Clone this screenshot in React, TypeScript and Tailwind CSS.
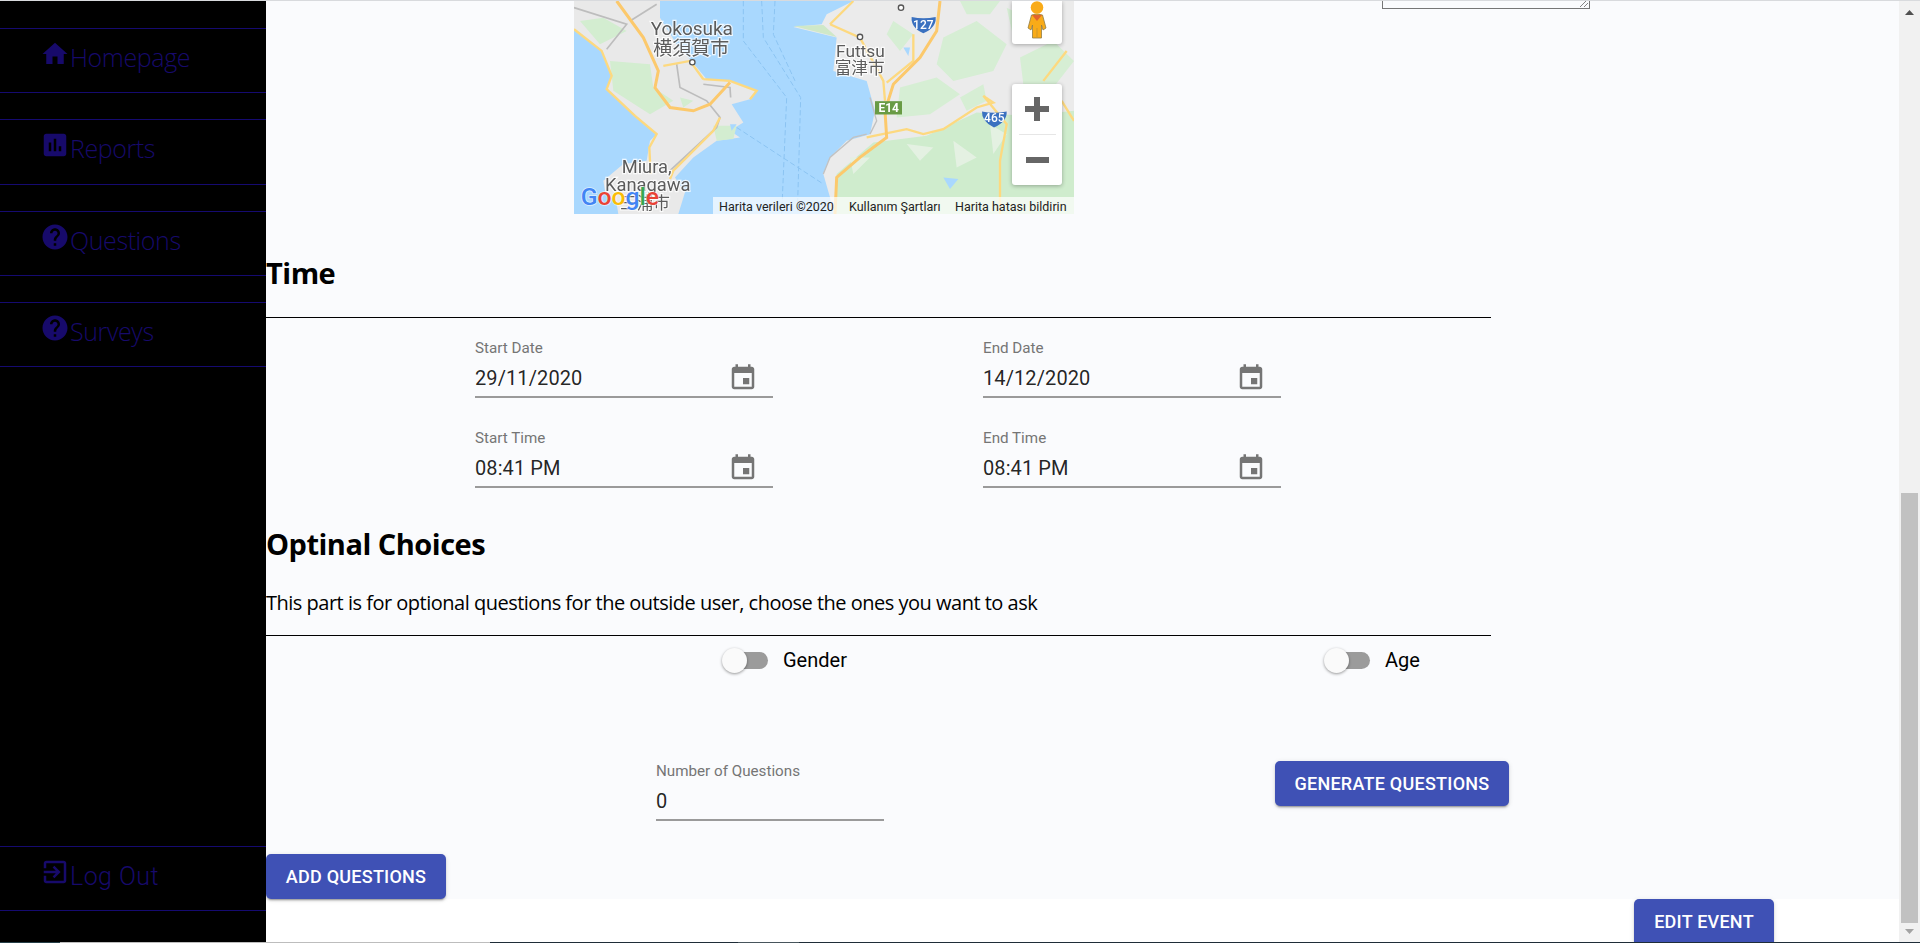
import React from "react";

const HOME = "M10 20v-6h4v6h5v-8h3L12 3 2 12h3v8z";
const REPORT = "M19 3H5c-1.1 0-2 .9-2 2v14c0 1.1.9 2 2 2h14c1.1 0 2-.9 2-2V5c0-1.1-.9-2-2-2zM9 17H7v-7h2v7zm4 0h-2V7h2v10zm4 0h-2v-4h2v4z";
const HELP = "M12 2C6.48 2 2 6.48 2 12s4.48 10 10 10 10-4.48 10-10S17.52 2 12 2zm1 17h-2v-2h2v2zm2.07-7.75l-.9.92C13.45 12.9 13 13.5 13 15h-2v-.5c0-1.1.45-2.1 1.17-2.83l1.24-1.26c.37-.36.59-.86.59-1.41 0-1.1-.9-2-2-2s-2 .9-2 2H8c0-2.21 1.79-4 4-4s4 1.79 4 4c0 .88-.36 1.68-.93 2.25z";
const LOGOUT = "M10.09 15.59L11.5 17l5-5-5-5-1.41 1.41L12.67 11H3v2h9.67l-2.58 2.59zM19 3H5c-1.11 0-2 .9-2 2v4h2V5h14v14H5v-4H3v4c0 1.1.89 2 2 2h14c1.1 0 2-.9 2-2V5c0-1.1-.9-2-2-2z";
const EVENT = "M17 12h-5v5h5v-5zM16 1v2H8V1H6v2H5c-1.11 0-1.99.9-1.99 2L3 19c0 1.1.89 2 2 2h14c1.1 0 2-.9 2-2V5c0-1.1-.9-2-2-2h-1V1h-2zm3 18H5V8h14v11z";

function Icon({ d, className }: { d: string; className?: string }) {
  return (
    <svg viewBox="0 0 24 24" className={className} fill="currentColor">
      <path d={d} />
    </svg>
  );
}

function NavItem({ icon, label, roboto, tall }: { icon: string; label: string; roboto?: boolean; tall?: boolean }) {
  return (
    <div className={(tall ? "h-[66px] " : "h-[65px] ") + "flex shrink-0 items-start border-y border-[#150a70] pl-[40px] text-[#170a6b]"}>
      <Icon d={icon} className="mt-[10px] h-[30px] w-[30px] shrink-0" />
      <span
        className={
          roboto
            ? "mt-[13px] font-['Roboto',sans-serif] text-[25px] leading-[34px] font-light tracking-[0.45px]"
            : "mt-[11px] font-['Open_Sans',sans-serif] text-[25px] leading-[34px] font-light tracking-[-0.4px]"
        }
      >
        {label}
      </span>
    </div>
  );
}

function Sidebar() {
  return (
    <aside className="flex h-[941px] w-[266px] shrink-0 flex-col bg-black pt-[27px]">
      <NavItem icon={HOME} label="Homepage" />
      <div className="h-[26px] shrink-0" />
      <NavItem icon={REPORT} label="Reports" tall />
      <div className="h-[26px] shrink-0" />
      <NavItem icon={HELP} label="Questions" />
      <div className="h-[26px] shrink-0" />
      <NavItem icon={HELP} label="Surveys" />
      <div className="flex-1" />
      <NavItem icon={LOGOUT} label="Log Out" roboto />
      <div className="h-[31px] shrink-0" />
    </aside>
  );
}

function MapDrawing() {
  const label = "fill-[#5b5b5b] stroke-white font-['Roboto','Noto_Sans_CJK_JP',sans-serif]";
  const halo = { paintOrder: "stroke" as const, strokeWidth: 7, strokeOpacity: 0.8 };
  return (
    <svg viewBox="42 0 1500 640" className="block h-[213px] w-[500px]" preserveAspectRatio="none">
      <defs>
        <filter id="soft">
          <feGaussianBlur stdDeviation="1.6" />
        </filter>
      </defs>
      <g filter="url(#soft)">
        <rect x="42" y="0" width="1500" height="640" fill="#a9d8fe" />
        <path d="M42 0 L300 0 L300 50 L350 130 L390 175 L440 235 L510 240 L590 270 L570 295 L515 310 L550 365 L510 390 L540 410 L470 420 L400 470 L345 530 L375 575 L355 640 L175 640 L170 610 L135 570 L130 540 L190 490 L260 480 L270 420 L290 400 L225 345 L140 265 L155 225 L125 150 L42 85 Z" fill="#e9e9e9" />
        <path d="M880 0 L800 40 L785 70 L700 78 L830 110 L820 210 L920 240 L945 330 L930 400 L860 420 L810 470 L790 520 L810 590 L820 640 L1542 640 L1542 0 Z" fill="#ebebeb" />
        <path d="M60 60 L130 50 L200 90 L120 130 Z M150 180 L270 190 L280 260 L340 300 L270 340 L160 270 Z M460 375 L530 375 L520 415 L470 420 Z M360 290 L400 300 L370 320 Z" fill="#d3edd0" />
        <path d="M820 640 L830 520 L940 425 L1100 405 L1250 335 L1400 345 L1542 330 L1542 640 Z" fill="#cfeccd" />
        <path d="M1150 110 L1250 60 L1340 130 L1300 210 L1180 240 L1130 190 Z M1000 60 L1060 100 L1020 150 L980 100 Z M1380 170 L1480 120 L1542 180 L1480 260 L1390 250 Z M1200 0 L1320 0 L1290 40 L1220 40 Z M1020 260 L1130 230 L1200 280 L1110 340 L1010 350 Z M1340 20 L1420 60 L1360 110 Z M1200 290 L1270 250 L1280 300 L1220 330 Z M1400 280 L1500 270 L1500 320 L1410 330 Z" fill="#d6eed4" />
        <path d="M1040 430 L1120 440 L1080 480 Z M1180 420 L1250 470 L1190 500 Z M1290 370 L1340 400 L1300 460 Z M870 470 L930 470 L880 520 Z" fill="#e4f1e2" />
        <path d="M700 75 L790 72 L830 108 Z" fill="#cfe8c8" />
        <path d="M1150 530 L1195 535 L1170 565 Z M1030 140 L1050 140 L1045 165 Z M510 370 L530 370 L515 390 Z" fill="#a9d8fe" />
        <path d="M550 0 L550 120 L680 290 L665 640 M605 0 L610 110 L722 290 L712 640 M645 0 L640 100 L705 240 M530 380 L790 550" fill="none" stroke="#8cc4f2" strokeWidth="3" strokeDasharray="16 8" />
        <path d="M42 20 L200 70 L140 145 M210 60 L290 10 M350 190 L360 260 L440 300 L480 350 L470 380 L330 510 M430 250 L510 260 L512 290" fill="none" stroke="#bdbdbd" strokeWidth="5" />
        <path d="M42 85 L125 150 L155 225 L140 265 L225 345 L290 400 L268 440 L272 520 M480 350 L460 390 L340 510 L330 535 M430 235 L510 240 L590 270 L570 295 M310 195 L390 180 L430 235" fill="none" stroke="#fdd97f" strokeWidth="7" />
        <path d="M170 0 L250 110 L295 210 L285 260 L330 320 L400 330 L450 310 L510 245" fill="none" stroke="#fcc96c" strokeWidth="9" />
        <path d="M810 70 L880 0 M810 70 L900 110 L970 240 L975 300 M1060 100 L1060 180 L980 245 M920 410 L1040 385 L1090 400 L1150 385 L1250 320 L1300 305 L1270 285 L1340 370 L1320 480 L1320 640 M1520 150 L1450 240 M1505 300 L1542 360" fill="none" stroke="#fdd97f" strokeWidth="7" />
        <path d="M1140 0 L1130 90 L1080 170 L1000 250 L975 330 L980 410 L900 470 L830 530 L825 640" fill="none" stroke="#fcc96c" strokeWidth="9" />
        <path d="M790 520 L810 470 L880 410 L920 400 M930 290 L950 360 L930 400" fill="none" stroke="#c2c2c2" strokeWidth="4" />
        <text x="272" y="102" fontSize="57" className={label} style={halo}>Yokosuka</text>
        <text x="280" y="162" fontSize="57" className={label} style={halo}>横須賀市</text>
        <text x="828" y="167" fontSize="52" className={label} style={halo}>Futtsu</text>
        <text x="824" y="219" fontSize="50" className={label} style={halo}>富津市</text>
        <text x="185" y="517" fontSize="55" className={label} style={halo}>Miura,</text>
        <text x="135" y="570" fontSize="55" className={label} style={halo}>Kanagawa</text>
        <text x="180" y="624" fontSize="50" className={label} style={halo}>三浦市</text>
        <circle cx="397" cy="184" r="8" fill="#fff" stroke="#555" strokeWidth="4" />
        <circle cx="900" cy="108" r="8" fill="#fff" stroke="#555" strokeWidth="4" />
        <circle cx="1023" cy="20" r="8" fill="#fff" stroke="#555" strokeWidth="4" />
        <path d="M1055 48 Q1090 56 1127 48 Q1130 80 1090 97 Q1052 80 1055 48 Z" fill="#3a71c0" />
        <text x="1090" y="84" fontSize="36" fontWeight="500" textAnchor="middle" fill="#fff" className="font-['Roboto',sans-serif]">127</text>
        <path d="M1266 332 Q1302 340 1340 332 Q1342 362 1302 380 Q1264 362 1266 332 Z" fill="#3a71c0" />
        <text x="1303" y="365" fontSize="36" fontWeight="500" textAnchor="middle" fill="#fff" className="font-['Roboto',sans-serif]">465</text>
        <rect x="945" y="301" width="81" height="40" fill="#699b45" />
        <text x="986" y="334" fontSize="36" fontWeight="700" textAnchor="middle" fill="#fff" className="font-['Roboto',sans-serif]">E14</text>
      </g>
      <text x="62" y="612" fontSize="74" fontWeight="500" className="font-['Roboto',sans-serif]" stroke="#fff" strokeWidth="5" strokeOpacity="0.6" style={{ paintOrder: "stroke" }}>
        <tspan fill="#4285f4">G</tspan>
        <tspan fill="#ea4335">o</tspan>
        <tspan fill="#fbbc05">o</tspan>
        <tspan fill="#4285f4">g</tspan>
        <tspan fill="#34a853">l</tspan>
        <tspan fill="#ea4335">e</tspan>
      </text>
    </svg>
  );
}

function MapBox() {
  return (
    <div className="relative h-[213px] w-[500px] shrink-0 overflow-hidden">
      <MapDrawing />
      <div className="absolute top-0 right-[12px] flex h-[43px] w-[50px] justify-center rounded-b-[3px] bg-white shadow-[0_1px_4px_rgba(0,0,0,0.3)]">
        <svg viewBox="0 0 50 43" className="h-[43px] w-[50px]">
          <path d="M19.5 14 Q25 12 30.5 14 L34 27 L31 29 L29.5 24 L29.5 37 L20.5 37 L20.5 24 L19 29 L16 27 Z" fill="#f9ab18" stroke="#8f7c46" strokeWidth="0.8" />
          <path d="M24.8 36 L25.2 36 L25.2 27 L24.8 27 Z" fill="#8f7c46" />
          <path d="M20 14 L30 14 L25 20 Z" fill="#e2642c" />
          <circle cx="25" cy="6.5" r="6.3" fill="#f9ab18" />
        </svg>
      </div>
      <div className="absolute top-[83px] right-[12px] flex h-[101px] w-[50px] flex-col items-center rounded-[3px] bg-white shadow-[0_1px_4px_rgba(0,0,0,0.3)]">
        <div className="flex h-[50px] w-full items-center justify-center">
          <svg viewBox="0 0 24 24" className="h-[24px] w-[24px]" fill="#666">
            <path d="M9 0h6v9h9v6h-9v9H9v-9H0V9h9z" />
          </svg>
        </div>
        <div className="h-px w-[37px] bg-[#e6e6e6]" />
        <div className="flex h-[50px] w-full items-center justify-center">
          <div className="h-[6px] w-[23px] bg-[#666]" />
        </div>
      </div>
      <div className="absolute right-0 bottom-0 flex h-[17px] w-[361px] items-center bg-white/70 pt-[3px] pl-[6px] font-['Roboto',sans-serif] text-[12.5px] leading-[14px] text-[#222]">
        <span className="w-[130px]">Harita verileri ©2020</span>
        <span className="w-[106px]">Kullanım Şartları</span>
        <span>Harita hatası bildirin</span>
      </div>
    </div>
  );
}

function Field({ label, value, width, icon }: { label: string; value: string; width: string; icon?: boolean }) {
  return (
    <div className={width}>
      <div className="h-[20px] font-['Roboto',sans-serif] text-[15.2px] leading-[20px] text-[#757575]">{label}</div>
      <div className="mt-[4px] flex h-[36px] items-start justify-between border-b-[2px] border-[#9a9a9a] font-['Roboto',sans-serif] text-[20px] leading-[32px] tracking-[0.1px] text-[rgba(0,0,0,0.87)]">
        <span>{value}</span>
        {icon && <Icon d={EVENT} className="mt-[1px] mr-[15px] h-[30px] w-[30px] shrink-0 text-[#757575]" />}
      </div>
    </div>
  );
}

function Toggle({ label }: { label: string }) {
  return (
    <div className="flex h-[25px] items-center">
      <div className="flex h-[25px] w-[46px] items-center">
        <div className="z-10 h-[25px] w-[25px] shrink-0 rounded-full bg-[#fafafa] shadow-[0_1px_3px_rgba(0,0,0,0.4)]" />
        <div className="-ml-[12px] h-[17px] w-[33px] shrink-0 rounded-r-full bg-[#9b9b9b]" />
      </div>
      <span className="ml-[15px] font-['Roboto',sans-serif] text-[20px] leading-[25px] text-black">{label}</span>
    </div>
  );
}

function Btn({ children, className }: { children: React.ReactNode; className: string }) {
  return (
    <div
      className={
        "flex h-[45px] shrink-0 items-center justify-center rounded-[5px] bg-[#3f51b5] font-['Roboto',sans-serif] text-[18px] font-medium tracking-[0.25px] text-white shadow-[0_3px_1px_-2px_rgba(0,0,0,0.2),0_2px_2px_0_rgba(0,0,0,0.14),0_1px_5px_0_rgba(0,0,0,0.12)] " +
        className
      }
    >
      {children}
    </div>
  );
}

function Main() {
  const heading = "font-['Open_Sans',sans-serif] text-[29px] leading-[40px] font-bold tracking-[-0.5px] text-black";
  return (
    <main className="flex h-[941px] w-[1633px] shrink-0 flex-col overflow-hidden bg-white">
      <div className="h-[898px] shrink-0 bg-[#fafbfd]">
        <div className="flex items-start pl-[308px]">
          <MapBox />
          <div className="relative ml-[308px] h-[8px] w-[208px] border-x border-b border-[#767676]">
            <svg viewBox="0 0 8 7" className="absolute right-[1px] bottom-[1px] h-[7px] w-[8px]" stroke="#666" strokeWidth="0.8">
              <path d="M0 7 L7 0 M4 7 L8 3" />
            </svg>
          </div>
        </div>
        <h2 className={heading + " mt-[39px]"}>Time</h2>
        <div className="mt-[24px] h-px w-[1225px] bg-black" />
        <div className="mt-[20px] ml-[209px] grid w-[806px] grid-cols-[298px_298px] gap-x-[210px] gap-y-[30px]">
          <Field label="Start Date" value="29/11/2020" width="w-[298px]" icon />
          <Field label="End Date" value="14/12/2020" width="w-[298px]" icon />
          <Field label="Start Time" value="08:41 PM" width="w-[298px]" icon />
          <Field label="End Time" value="08:41 PM" width="w-[298px]" icon />
        </div>
        <h2 className={heading + " mt-[36px]"}>Optinal Choices</h2>
        <p className="mt-[25px] font-['Open_Sans',sans-serif] text-[20px] leading-[28px] tracking-[-0.5px] text-black">
          This part is for optional questions for the outside user, choose the ones you want to ask
        </p>
        <div className="mt-[18px] h-px w-[1225px] bg-black" />
        <div className="mt-[12px] flex pl-[456px]">
          <div className="w-[602px]">
            <Toggle label="Gender" />
          </div>
          <Toggle label="Age" />
        </div>
        <div className="mt-[88px] flex items-start pl-[390px]">
          <Field label="Number of Questions" value="0" width="w-[228px]" />
          <Btn className="ml-[391px] w-[234px]">GENERATE QUESTIONS</Btn>
        </div>
        <Btn className="mt-[33px] w-[180px]">ADD QUESTIONS</Btn>
      </div>
      <Btn className="ml-[1368px] w-[140px] rounded-b-none">EDIT EVENT</Btn>
    </main>
  );
}

function Scrollbar() {
  return (
    <div className="flex h-[941px] w-[21px] shrink-0 flex-col items-center bg-[#f1f1f1]">
      <svg viewBox="0 0 9 5" className="mt-[9px] h-[5px] w-[9px]" fill="#505050">
        <path d="M4.5 0 L9 5 L0 5 Z" />
      </svg>
      <div className="mt-[478px] h-[430px] w-[17px] bg-[#c1c1c1]" />
      <svg viewBox="0 0 9 5" className="mt-[6px] h-[5px] w-[9px]" fill="#a3a3a3">
        <path d="M0 0 L9 0 L4.5 5 Z" />
      </svg>
    </div>
  );
}

export default function App() {
  return (
    <div className="flex h-[943px] w-[1920px] flex-col overflow-hidden bg-white">
      <div className="h-px shrink-0 bg-[#d8dadd]" />
      <div className="flex h-[941px] shrink-0">
        <Sidebar />
        <Main />
        <Scrollbar />
      </div>
      <div className="flex h-px shrink-0 bg-[#1f2d38]">
        <div className="w-[60px] bg-[#263f48]" />
        <div className="w-[430px] bg-[#bdbdbd]" />
        <div className="ml-[248px] w-[61px] bg-[#47555c]" />
      </div>
    </div>
  );
}
